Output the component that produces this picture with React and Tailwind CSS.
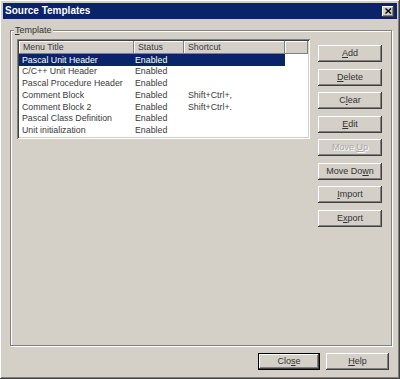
import React from "react";

const raised =
  "shadow-[inset_-1px_-1px_0_#404040,inset_1px_1px_0_#ffffff,inset_-2px_-2px_0_#808080,inset_2px_2px_0_#d4d0c8]";

function Btn({ label, u, disabled, isDefault, className = "" }) {
  const i = label.indexOf(u);
  return (
    <button
      className={`h-[17px] flex items-center justify-center bg-[#d4d0c8] text-[9px] leading-none ${
        isDefault ? "border border-black" : ""
      } ${raised} ${
        disabled ? "text-[#a8a8a8] [text-shadow:1px_1px_0_#fff]" : "text-[#333]"
      } ${className}`}
    >
      <span className="whitespace-pre">
        {label.slice(0, i)}
        <span className="underline underline-offset-1">{u}</span>
        {label.slice(i + 1)}
      </span>
    </button>
  );
}

const rows = [
  ["Pascal Unit Header", "Enabled", ""],
  ["C/C++ Unit Header", "Enabled", ""],
  ["Pascal Procedure Header", "Enabled", ""],
  ["Comment Block", "Enabled", "Shift+Ctrl+,"],
  ["Comment Block 2", "Enabled", "Shift+Ctrl+."],
  ["Pascal Class Definition", "Enabled", ""],
  ["Unit initialization", "Enabled", ""],
];

const sideButtons = [
  ["Add", "A"],
  ["Delete", "D"],
  ["Clear", "l"],
  ["Edit", "E"],
  ["Move Up", "U", true],
  ["Move Down", "w"],
  ["Import", "I"],
  ["Export", "x"],
];

export default function App() {
  return (
    <div
      className={`w-[400px] h-[379px] bg-[#d4d0c8] p-[3px] flex flex-col ${raised}`}
      style={{ fontFamily: '"Liberation Sans", Arial, sans-serif' }}
    >
      {/* title bar */}
      <div className="h-[16px] bg-[#0a246a] flex items-center justify-between pl-[2px] pr-[3px]">
        <span className="text-white font-bold text-[10px] leading-none">Source Templates</span>
        <div className={`w-[12px] h-[11px] bg-[#d4d0c8] flex items-center justify-center ${raised}`}>
          <svg width="7" height="6" viewBox="0 0 7 6">
            <path d="M0.5 0.5 L6 5.5 M6 0.5 L0.5 5.5" stroke="#000" strokeWidth="1.4" />
          </svg>
        </div>
      </div>

      <div className="flex-1 flex flex-col px-[7px] pb-[6px] pt-[6px]">
        <fieldset className="h-[321px] border border-[#808080] shadow-[1px_1px_0_#ffffff,inset_1px_1px_0_#ffffff] pl-[6px] pr-[9px] pt-[3px] pb-[11px] flex">
          <legend className="-ml-[3px] px-[1px] bg-[#d4d0c8] text-[9px] leading-[11px] text-[#333]">
            <span className="underline underline-offset-1">T</span>emplate
          </legend>
          <div className="flex gap-[8px] w-full h-full">
            {/* list view */}
            <div className="w-[293px] h-full bg-white shadow-[inset_1px_1px_0_#808080,inset_-1px_-1px_0_#ffffff,inset_2px_2px_0_#404040,inset_-2px_-2px_0_#d4d0c8] p-[2px] text-[8.8px] text-[#3a3a3a]">
              <div className="flex h-[13px]">
                {[
                  ["Menu Title", "w-[115px]"],
                  ["Status", "w-[50px]"],
                  ["Shortcut", "w-[101px]"],
                  ["", "flex-1"],
                ].map(([t, w], k) => (
                  <div
                    key={k}
                    className={`${w} bg-[#d4d0c8] flex items-center pl-[4px] leading-none shadow-[inset_-1px_-1px_0_#808080,inset_1px_1px_0_#ffffff]`}
                  >
                    {t}
                  </div>
                ))}
              </div>
              {rows.map((r, k) => (
                <div
                  key={k}
                  className={`flex w-[266px] h-[11.8px] items-center leading-none ${
                    k === 0 ? "bg-[#0a246a] text-white" : ""
                  }`}
                >
                  <div className="w-[115px] pl-[3px]">{r[0]}</div>
                  <div className="w-[50px] pl-[1px]">{r[1]}</div>
                  <div className="w-[101px] pl-[4px]">{r[2]}</div>
                </div>
              ))}
            </div>

            {/* side buttons */}
            <div className="flex flex-col gap-[6.5px] pt-[6px]">
              {sideButtons.map(([l, u, d]) => (
                <Btn key={l} label={l} u={u} disabled={d} className="w-[64px]" />
              ))}
            </div>
          </div>
        </fieldset>

        <div className="flex justify-end gap-[6px] mt-[7px] pr-[1px]">
          <Btn label="Close" u="s" isDefault className="w-[62px]" />
          <Btn label="Help" u="H" className="w-[63px]" />
        </div>
      </div>
    </div>
  );
}
